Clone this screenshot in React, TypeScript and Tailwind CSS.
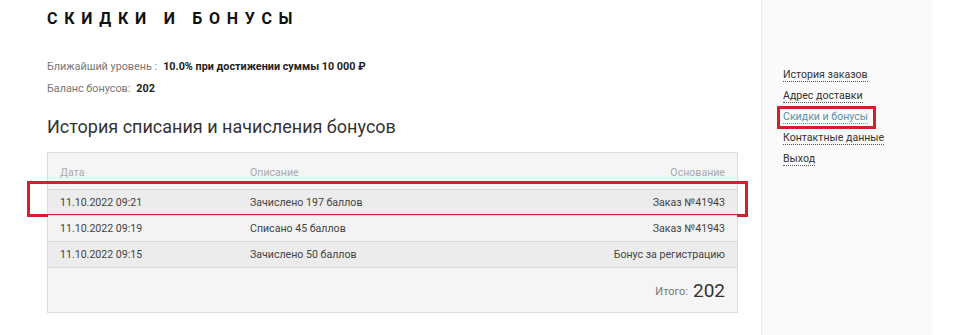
import React from "react";

const rows = [
  { d: "11.10.2022 09:21", o: "Зачислено 197 баллов", b: "Заказ №41943", bg: "bg-[#ececec]", hl: true },
  { d: "11.10.2022 09:19", o: "Списано 45 баллов", b: "Заказ №41943", bg: "bg-[#f3f3f3]", hl: false },
  { d: "11.10.2022 09:15", o: "Зачислено 50 баллов", b: "Бонус за регистрацию", bg: "bg-[#ececec]", hl: false },
];

const links = ["История заказов", "Адрес доставки", "Скидки и бонусы", "Контактные данные", "Выход"];

export default function App() {
  return (
    <div className="flex h-[335px] w-[960px] overflow-hidden bg-white font-['Roboto','Liberation_Sans',sans-serif] text-[#333]">
      <div className="w-[761px] shrink-0 pl-[47px] pr-[23px] pt-[9px]">
        <h1 className="text-[16px] font-bold leading-[20px] tracking-[0.42em] text-[#111]">СКИДКИ И БОНУСЫ</h1>
        <div className="mt-[30px] flex items-center text-[10.8px] leading-[16px]">
          <span className="text-[#777]">Ближайший уровень :</span>
          <span className="ml-[6px] font-bold text-[#222]">10.0% при достижении суммы 10 000 ₽</span>
        </div>
        <div className="mt-[6px] flex items-center text-[10.8px] leading-[16px]">
          <span className="text-[#777]">Баланс бонусов:</span>
          <span className="ml-[6px] font-bold text-[#222]">202</span>
        </div>
        <h2 className="mt-[18px] text-[18px] font-normal leading-[24px] text-[#333]">История списания и начисления бонусов</h2>
        <div className="mt-[13px] border border-[#dcdcdc] bg-[#f5f5f5] text-[10.6px]">
          <div className="flex h-[36px] items-end pb-[8px] pl-[12px] pr-[12px] text-[#aaa]">
            <span className="w-[190px]">Дата</span>
            <span className="flex-1">Описание</span>
            <span>Основание</span>
          </div>
          {rows.map((r, i) => (
            <div key={i} className={`relative flex h-[26px] items-center border-t border-[#dadada] pl-[12px] pr-[12px] text-[#444] ${r.bg}`}>
              <span className="w-[190px]">{r.d}</span>
              <span className="flex-1">{r.o}</span>
              <span>{r.b}</span>
              {r.hl && (
                <div className="pointer-events-none absolute left-[-21px] right-[-11px] top-[-9px] bottom-[-2px] border-[3px] border-[#d3202c]" />
              )}
            </div>
          ))}
          <div className="flex h-[45px] items-end justify-end border-t border-[#dadada] pb-[9px] pr-[12px]">
            <span className="mb-[3px] text-[11px] text-[#777]">Итого:</span>
            <span className="ml-[5px] text-[19px] leading-[24px] text-[#333]">202</span>
          </div>
        </div>
      </div>
      <div className="w-[171px] shrink-0 border-l border-[#ececec] bg-[#fafafa] pl-[21px] pt-[67px]">
        <div className="flex flex-col gap-[5px] text-[10.6px] leading-[16px]">
          {links.map((l, i) => (
            <div key={i} className="relative self-start">
              <span
                className={`border-b border-dotted ${i === 2 ? "border-[#6b9bb0] text-[#5e8fa6]" : "border-[#555] text-[#333]"}`}
              >
                {l}
              </span>
              {i === 2 && (
                <div className="pointer-events-none absolute left-[-6px] right-[-8px] top-[-3px] bottom-[-4px] border-[3px] border-[#d3202c]" />
              )}
            </div>
          ))}
        </div>
      </div>
      <div className="flex-1 bg-white" />
    </div>
  );
}
